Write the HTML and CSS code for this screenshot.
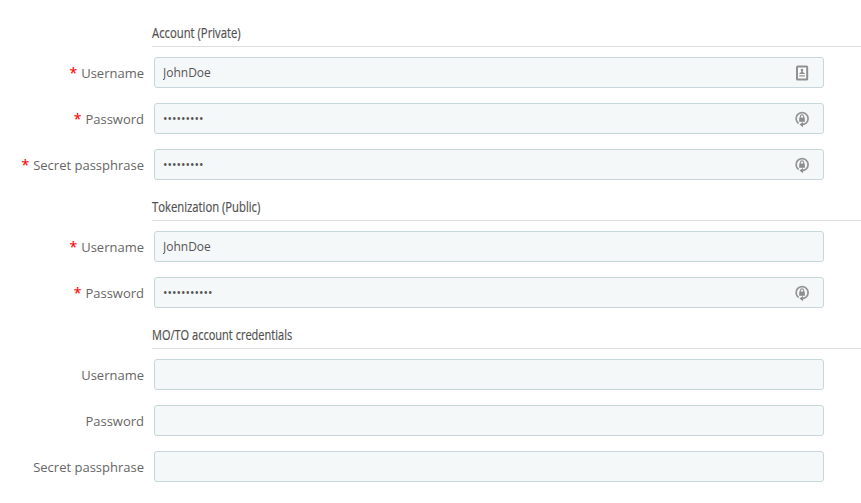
FILE: index.html
```html
<!DOCTYPE html>
<html lang="en">
<head>
<meta charset="utf-8">
<title>Account credentials</title>
<link rel="stylesheet" href="styles.css">
</head>
<body>
<svg class="defs" aria-hidden="true">
  <symbol id="card" viewBox="0 0 16 18">
    <rect x="3" y="2.6" width="10.2" height="12.9" rx=".6" fill="#fafbfb" stroke="#8f9191" stroke-width="2"/>
    <path d="M8 4.7a1.3 1.3 0 0 1 .8 2.3v1.2l1.8.8v1H5.4V9l1.8-.8V7A1.3 1.3 0 0 1 8 4.7z" fill="#8b8d8d"/>
    <path d="M5.2 11.8h5.6" stroke="#aaa" stroke-width="1.6"/>
  </symbol>
  <symbol id="lock" viewBox="0 0 16 18">
    <path d="M4.6 13.4A6 6 0 1 1 12 13.1Q10.4 14.4 8 14.5" fill="none" stroke="#959797" stroke-width="1.8"/>
    <path d="M9 11.9v5.4l-3.5-2.7z" fill="#8b8d8d"/>
    <rect x="5.2" y="7.6" width="5.6" height="4.2" fill="#8b8d8d"/>
    <path d="M6.4 8V6.4a1.6 1.6 0 0 1 3.2 0V8" fill="none" stroke="#959797" stroke-width="1.2"/>
  </symbol>
</svg>
<form class="form">
  <section>
    <h2 class="heading"><span class="heading-text private">Account (Private)</span></h2>
    <div class="row"><label class="label required" for="a1">Username</label><div class="field"><input id="a1" type="text" value="JohnDoe"><svg class="icon"><use href="#card"/></svg></div></div>
    <div class="row"><label class="label required" for="a2">Password</label><div class="field"><input id="a2" type="password" value="password1"><svg class="icon"><use href="#lock"/></svg></div></div>
    <div class="row"><label class="label required" for="a3">Secret passphrase</label><div class="field"><input id="a3" type="password" value="password1"><svg class="icon"><use href="#lock"/></svg></div></div>
  </section>
  <section>
    <h2 class="heading"><span class="heading-text public">Tokenization (Public)</span></h2>
    <div class="row"><label class="label required" for="b1">Username</label><div class="field"><input id="b1" type="text" value="JohnDoe"></div></div>
    <div class="row"><label class="label required" for="b2">Password</label><div class="field"><input id="b2" type="password" value="password123"><svg class="icon"><use href="#lock"/></svg></div></div>
  </section>
  <section>
    <h2 class="heading"><span class="heading-text moto">MO/TO account credentials</span></h2>
    <div class="row"><label class="label" for="c1">Username</label><div class="field"><input id="c1" type="text"></div></div>
    <div class="row"><label class="label" for="c2">Password</label><div class="field"><input id="c2" type="password"></div></div>
    <div class="row"><label class="label" for="c3">Secret passphrase</label><div class="field"><input id="c3" type="password"></div></div>
  </section>
</form>
</body>
</html>
```
FILE: styles.css
```css
* { box-sizing: border-box; }
body {
  margin: 0;
  background: #fff;
  color: #555;
  font-family: "Open Sans", sans-serif;
  overflow: hidden;
}
.defs { display: none; }
.form { padding-top: 22px; }
.heading {
  height: 25px;
  margin: 0 0 10px 152px;
  border-bottom: 1px solid #ddd;
  font-family: "Ubuntu Condensed", "Open Sans", sans-serif;
  font-size: 14.5px;
  font-weight: 400;
  line-height: 22px;
  color: #505050;
}
.heading-text {
  display: inline-block;
  transform-origin: left;
  white-space: nowrap;
  -webkit-text-stroke: .2px #505050;
}
.private { transform: scaleX(.778); }
.public { transform: scaleX(.777); }
.moto { transform: scaleX(.76); }
.row {
  display: grid;
  grid-template-columns: 144px 670px;
  column-gap: 10px;
  height: 31px;
  margin-bottom: 15px;
}
section .row:last-child { margin-bottom: 16px; }
.label {
  text-align: right;
  font-size: 13px;
  line-height: 32px;
  color: #666;
  white-space: nowrap;
}
.required::before {
  content: "*";
  margin-right: 4px;
  color: #f00;
  font-size: 14px;
  line-height: 1;
  -webkit-text-stroke: .15px #f00;
}
.field {
  display: flex;
  align-items: center;
  height: 31px;
  padding: 0 13px 0 8px;
  background: #f5f8f9;
  border: 1px solid #c7d6db;
  border-radius: 3px;
}
.field input {
  flex: 1;
  min-width: 0;
  height: 29px;
  padding: 0;
  border: 0;
  outline: 0;
  background: transparent;
  color: #555;
  font: 12px "Open Sans", sans-serif;
}
.icon { width: 16px; height: 18px; }
```
